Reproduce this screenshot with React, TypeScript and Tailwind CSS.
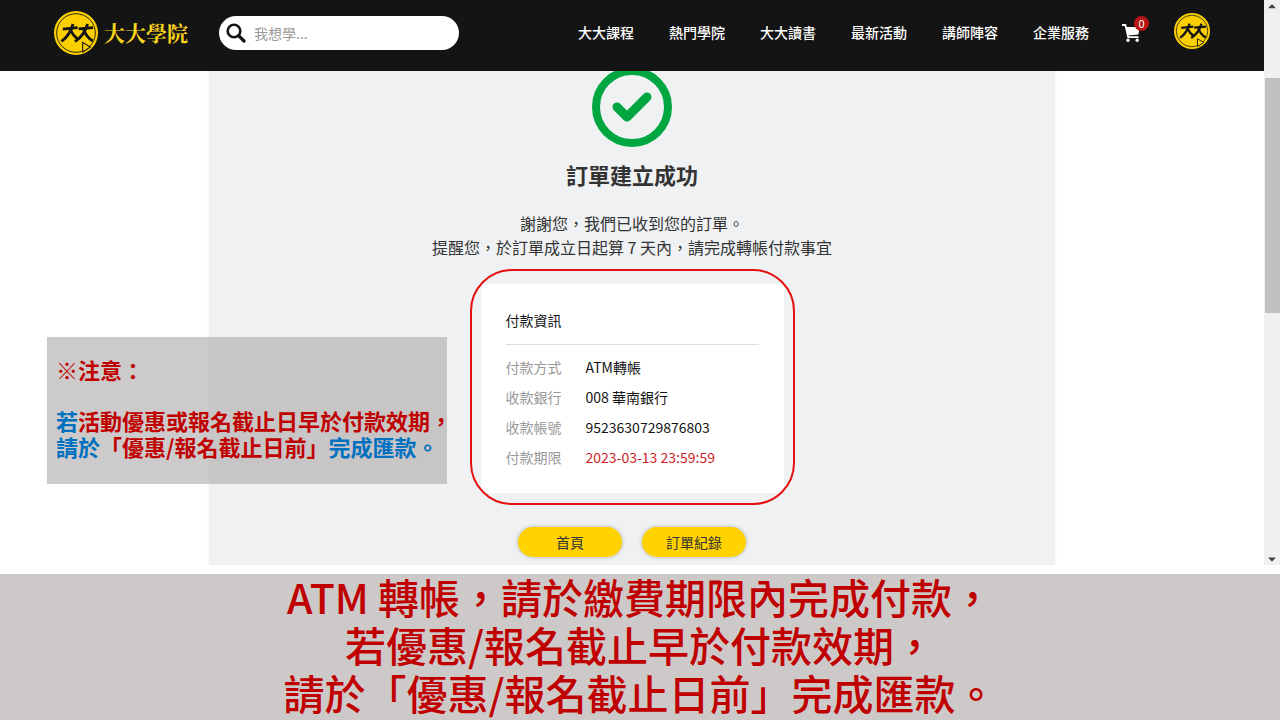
import { type FC } from "react";
import { FaCaretDown, FaCaretUp } from "react-icons/fa";

const NAV_LINKS = [
  "大大課程",
  "熱門學院",
  "大大讀書",
  "最新活動",
  "講師陣容",
  "企業服務",
];

const PAYMENT_ROWS = [
  { label: "付款方式", value: "ATM轉帳" },
  { label: "收款銀行", value: "008 華南銀行" },
  { label: "收款帳號", value: "9523630729876803" },
  { label: "付款期限", value: "2023-03-13 23:59:59", highlight: true },
];

const LogoMark: FC<{ className: string }> = ({ className }) => (
  <svg viewBox="0 0 44 44" className={className} aria-hidden="true">
    <circle cx="22" cy="22" r="22" fill="#fcd000" />
    <circle
      cx="22"
      cy="22"
      r="19.3"
      fill="none"
      stroke="#141414"
      strokeWidth="0.9"
    />
    <g fill="none" stroke="#141414" strokeWidth="2.8">
      <path d="M8.8 18.2 23.6 16.6M24.6 17.8 39 16.6" />
      <path d="M19 13C17 20 13.4 26.4 7.4 30.4" />
      <path d="M16.4 18.5C18.2 22.8 20.6 26 24.4 28.2" />
      <path d="M33.6 13C31.6 20 27.6 26.4 21 30.6" />
      <path d="M29.6 18.5C31.4 23.6 34.4 27.4 38.8 30" />
    </g>
    <path
      d="M28.6 31.5 36.4 36 28.8 41Z"
      fill="#fcd000"
      stroke="#141414"
      strokeWidth="1.1"
    />
  </svg>
);

const CartIcon: FC<{ className: string }> = ({ className }) => (
  <svg viewBox="0 0 18 18" className={className} aria-hidden="true">
    <path
      d="M0 1H3.4L6.2 13.2H16.6"
      fill="none"
      stroke="currentColor"
      strokeWidth="1.8"
    />
    <path d="M3.6 3H18L16.4 10.6 5.6 11.4Z" fill="currentColor" />
    <circle cx="6" cy="16.2" r="1.7" fill="currentColor" />
    <circle cx="15.2" cy="16.2" r="1.7" fill="currentColor" />
  </svg>
);

const Header: FC = () => (
  <header className="relative z-10 flex h-[71px] items-center bg-[#141414] pr-[54px] pb-1.5 pl-[54px]">
    <a href="#" className="flex items-center gap-1.5">
      <LogoMark className="h-11 w-11" />
      <span className="font-['Noto_Serif_CJK_TC','Noto_Sans_CJK_TC',serif] text-[21px] font-bold text-[#fcd51c]">
        大大學院
      </span>
    </a>
    <label className="ml-[31px] flex h-[34px] w-60 items-center gap-2 rounded-full bg-white pl-[7px]">
      <svg viewBox="0 0 20 20" className="h-5 w-5 shrink-0" aria-hidden="true">
        <circle
          cx="8"
          cy="8"
          r="6.3"
          fill="none"
          stroke="#141414"
          strokeWidth="2.6"
        />
        <path
          d="M12.8 12.8 18 18"
          stroke="#141414"
          strokeWidth="3.2"
          strokeLinecap="round"
        />
      </svg>
      <input
        type="text"
        aria-label="搜尋"
        placeholder="我想學..."
        className="w-full min-w-0 bg-transparent pr-4 text-sm outline-none placeholder:text-[#999]"
      />
    </label>
    <nav className="mb-0.5 ml-auto flex gap-[35px] text-sm font-medium whitespace-nowrap text-white">
      {NAV_LINKS.map((title) => (
        <a key={title} href="#">
          {title}
        </a>
      ))}
    </nav>
    <button
      type="button"
      aria-label="購物車"
      className="relative ml-[33px] w-[22px] text-white"
    >
      <CartIcon className="h-[18px] w-[18px]" />
      <span className="absolute -top-2 left-3 flex h-[15px] w-[15px] items-center justify-center rounded-full bg-[#b81414] text-[11px]">
        0
      </span>
    </button>
    <a href="#" aria-label="會員中心" className="mb-1 ml-[30px]">
      <LogoMark className="h-9 w-9" />
    </a>
  </header>
);

const PaymentCard: FC = () => (
  <div className="relative mt-[9px] px-[11px] pt-[15px] pb-3">
    <section className="w-[303px] rounded bg-white px-[25px] pt-[26px] pb-[21px] text-sm text-[#141414]">
      <h2 className="border-b border-[#ddd] pb-3.5 leading-5">付款資訊</h2>
      <dl className="mt-[7px] leading-[30px]">
        {PAYMENT_ROWS.map(({ label, value, highlight }) => (
          <div key={label} className="flex">
            <dt className="w-20 text-[#999]">{label}</dt>
            <dd className={highlight ? "text-[#cc1f24]" : ""}>{value}</dd>
          </div>
        ))}
      </dl>
    </section>
    <div className="pointer-events-none absolute inset-0 rounded-[42px] border-2 border-[#e60f0f]" />
  </div>
);

const Notice: FC = () => (
  <aside className="absolute top-[337px] left-[47px] w-[400px] bg-[#afabab]/63 pt-[19px] pb-[25px] pl-[9px] text-[22px] leading-[26px] font-bold whitespace-nowrap text-[#c00000]">
    <p className="mb-[25px]">※注意：</p>
    <p>
      <span className="text-[#0070c0]">若</span>活動優惠或報名截止日早於付款效期，
    </p>
    <p>
      <span className="text-[#0070c0]">請於</span>「優惠/報名截止日前」
      <span className="text-[#0070c0]">完成匯款。</span>
    </p>
  </aside>
);

const Scrollbar: FC = () => (
  <div
    className="flex w-4 shrink-0 flex-col items-center bg-[#f0f0f0] text-[#444]"
    aria-hidden="true"
  >
    <FaCaretUp className="h-3 w-3" />
    <div className="mt-[66px] ml-px h-[235px] w-[15px] bg-[#c0c0c0]" />
    <FaCaretDown className="mt-auto h-3 w-3" />
  </div>
);

export default function App() {
  return (
    <div className="bg-white font-['Noto_Sans_CJK_TC',sans-serif]">
      <div className="relative flex">
        <div className="min-w-0 flex-1 overflow-hidden">
          <Header />
          <main className="mx-auto flex max-w-[844px] flex-col items-center bg-[#f0f1f3] pb-2 text-[#333] shadow-[0_0_3px_rgba(0,0,0,0.15)]">
            <svg
              viewBox="0 0 80 80"
              className="-mt-1 h-20 w-20"
              fill="none"
              stroke="#00a63f"
              aria-hidden="true"
            >
              <circle cx="40" cy="40" r="36" strokeWidth="8" />
              <path
                d="M25 40 35 50 55 30"
                strokeWidth="9"
                strokeLinecap="round"
                strokeLinejoin="round"
              />
            </svg>
            <h1 className="mt-[11px] text-[22px] leading-8 font-bold">
              訂單建立成功
            </h1>
            <p className="mt-[21px] mb-px text-center text-base leading-6">
              謝謝您，我們已收到您的訂單。
              <br />
              提醒您，於訂單成立日起算 7 天內，請完成轉帳付款事宜
            </p>
            <PaymentCard />
            <div className="mt-[22px] flex gap-5 text-sm">
              <button
                type="button"
                className="h-[30px] w-[104px] rounded-full bg-[#ffd200] shadow-[0_0_4px_rgba(0,0,0,0.25)]"
              >
                首頁
              </button>
              <button
                type="button"
                className="h-[30px] w-[104px] rounded-full bg-[#ffd200] shadow-[0_0_4px_rgba(0,0,0,0.25)]"
              >
                訂單紀錄
              </button>
            </div>
          </main>
        </div>
        <Scrollbar />
        <Notice />
      </div>
      <footer className="mt-[9px] flex flex-col gap-1 bg-[#cdc9c9] pb-1.5 text-center text-[41px] leading-[44px] font-medium text-[#c00000]">
        <p>ATM 轉帳，請於繳費期限內完成付款，</p>
        <p>若優惠/報名截止早於付款效期，</p>
        <p>請於「優惠/報名截止日前」完成匯款。</p>
      </footer>
    </div>
  );
}
